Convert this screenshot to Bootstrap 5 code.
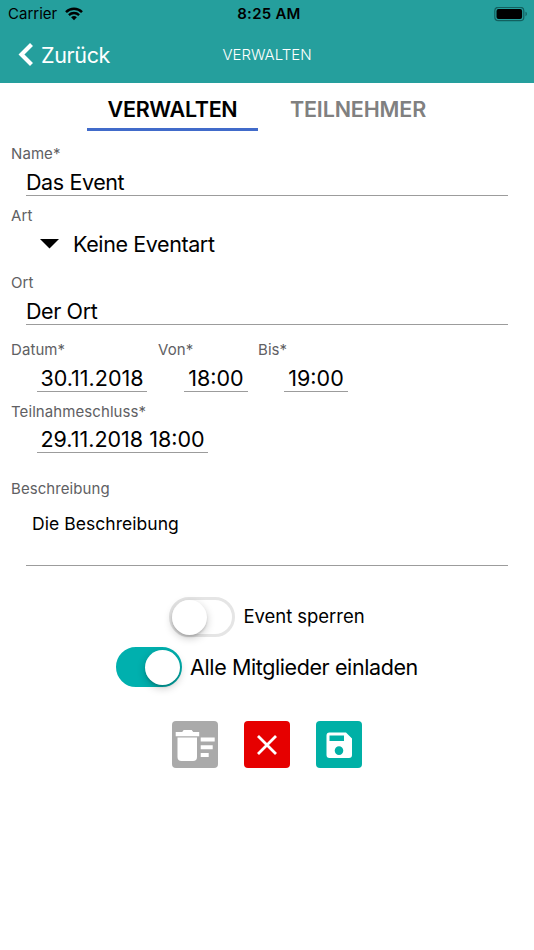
<!DOCTYPE html>
<html lang="de">
<head>
<meta charset="utf-8">
<meta name="viewport" content="width=device-width, initial-scale=1">
<title>Verwalten</title>
<link href="https://cdn.jsdelivr.net/npm/bootstrap@5.3.0/dist/css/bootstrap.min.css" rel="stylesheet">
<style>
  body { font-family: Inter, "Liberation Sans", sans-serif; font-size: 21.5px; letter-spacing: -.4px; color: #000; background: #fff; height: 950px; overflow: hidden; }
  .app-head { background: #259f9d; height: 83px; }
  .tri { display: grid; grid-template-columns: 1fr auto 1fr; align-items: center; }
  .status { height: 28px; font-size: 15px; line-height: 28px; letter-spacing: 0; padding-left: 8px; padding-right: 3px; }
  .clock { letter-spacing: .25px; margin-right: 1px; }
  .title-bar { height: 54px; color: #fff; }
  .back { font-size: 21.5px; line-height: 28px; letter-spacing: -.35px; }
  .head-title { font-size: 15px; font-weight: 300; line-height: 20px; letter-spacing: 0; }
  .tabs { height: 48px; padding-left: 87px; }
  .tab { height: 48px; width: 171px; line-height: 53px; font-size: 21.5px; letter-spacing: -.3px; font-weight: 600; text-align: center; white-space: nowrap; border-bottom: 3px solid #416bca; }
  .tab-off { width: 200px; color: #808080; border-color: transparent; letter-spacing: -.15px; }
  .form-area { padding: 13px 11px 0; }
  .lbl { font-size: 15px; line-height: 20px; letter-spacing: .08px; color: #606063; white-space: nowrap; }
  .fld { line-height: 26px; height: 27px; border-bottom: 1px solid #9c9c9c; white-space: nowrap; }
  .fld-wide { margin: 5px 15px 0 15px; }
  .fld-short { margin: 5px 0 0 26px; text-align: center; letter-spacing: 0; }
  .fld-end { margin-top: 4px; }
  .w-date { width: 110px; } .w-time { width: 64px; } .w-full { width: 171px; }
  .c-date { width: 147px; } .c-time { width: 100px; }
  .gap-a { margin-top: 10px; } .gap-b { margin-top: 15px; } .gap-c { margin-top: 26px; }
  .pick { margin: 4px 0 0 29px; height: 28px; line-height: 28px; }
  .pick svg { margin-right: 14px; }
  .desc { margin: 5px 15px 0; height: 62px; font-size: 17.5px; line-height: 40px; letter-spacing: .05px; padding-left: 6px; border-bottom: 1px solid #9c9c9c; }
  .sw { width: 66px; height: 40px; border-radius: 20px; border: 3px solid #e5e5e5; }
  .sw .knob { margin: 0 -.5px; }
  .sw-on { background: #00b0ae; border-color: #00b0ae; }
  .knob { width: 35px; height: 35px; border-radius: 50%; background: #fff; box-shadow: 0 3px 8px rgba(0,0,0,.22), 0 2px 2px rgba(0,0,0,.12); }
  .row-a { margin-top: 31px; font-size: 18.5px; letter-spacing: -.03px; }
  .row-b { margin-top: 10px; }
  .sw-text { margin-left: 8px; }
  .acts { margin-top: 34px; gap: 26px; }
  .act { width: 46px; height: 47px; border-radius: 4px; border: 0; padding: 0; background: #aaa; }
  .act svg { display: block; }
  .act-x { background: #e60000; } .act-save { background: #00b0a6; }
</style>
</head>
<body>
<header class="app-head">
  <div class="status tri">
    <div class="d-flex align-items-center">
      <span>Carrier</span>
      <svg class="ms-2" width="18" height="14" viewBox="0 0 18 14" fill="none" stroke="#000"><path d="M1 5.100a11.500 11.500 0 0 1 16 0" stroke-width="2.500"/><path d="M3.900 8.100a7.300 7.300 0 0 1 10.200 0" stroke-width="2.300"/><path d="M9 13.200l-2.900-2.900a4.200 4.200 0 0 1 5.800 0z" fill="#000" stroke="none"/></svg>
    </div>
    <span class="clock fw-semibold">8:25 AM</span>
    <div class="d-flex justify-content-end align-items-center">
      <svg width="37" height="15" viewBox="0 0 37 15"><rect x=".8" y=".3" width="29" height="13.400" rx="3.500" fill="none" stroke="#12605f" stroke-width="1.200"/><rect x="2.500" y="2" width="25.600" height="10" rx="2" fill="#000"/><path d="M31.500 4.800c1.800.6 1.800 3.800 0 4.400z" fill="#12605f"/></svg>
    </div>
  </div>
  <div class="title-bar tri">
    <a class="back d-flex align-items-center text-white text-decoration-none" href="#">
      <svg width="41" height="28" viewBox="0 0 41 28"><path d="M31.500 3.500L21.500 13.500l10 10" fill="none" stroke="#fff" stroke-width="4.200"/></svg><span>Zurück</span>
    </a>
    <span class="head-title">VERWALTEN</span>
    <span></span>
  </div>
</header>

<nav class="tabs d-flex">
  <div class="tab">VERWALTEN</div>
  <div class="tab tab-off">TEILNEHMER</div>
</nav>

<main class="form-area">
  <div class="lbl">Name*</div>
  <div class="fld fld-wide">Das Event</div>

  <div class="lbl gap-a">Art</div>
  <div class="pick d-flex align-items-center">
    <svg width="19" height="10" viewBox="0 0 19 10"><path d="M0 0h19l-9.500 9.500z"/></svg>
    <span>Keine Eventart</span>
  </div>

  <div class="lbl gap-b">Ort</div>
  <div class="fld fld-wide">Der Ort</div>

  <div class="d-flex gap-b">
    <div class="c-date"><div class="lbl">Datum*</div><div class="fld fld-short w-date">30.11.2018</div></div>
    <div class="c-time"><div class="lbl">Von*</div><div class="fld fld-short w-time">18:00</div></div>
    <div class="c-time"><div class="lbl">Bis*</div><div class="fld fld-short w-time">19:00</div></div>
  </div>

  <div class="lbl gap-a">Teilnahmeschluss*</div>
  <div class="fld fld-short fld-end w-full">29.11.2018 18:00</div>

  <div class="lbl gap-c">Beschreibung</div>
  <div class="desc">Die Beschreibung</div>

  <div class="row-a d-flex justify-content-center align-items-center">
    <div class="sw d-flex align-items-center"><div class="knob"></div></div>
    <span class="sw-text">Event sperren</span>
  </div>
  <div class="row-b d-flex justify-content-center align-items-center">
    <div class="sw sw-on d-flex align-items-center justify-content-end"><div class="knob"></div></div>
    <span class="sw-text">Alle Mitglieder einladen</span>
  </div>

  <div class="acts d-flex justify-content-center">
    <button type="button" class="act" aria-label="Löschen">
      <svg width="46" height="46" viewBox="0 0 46 46" fill="#fff"><path d="M3.700 10h6.500l1.500-2h8l1.500 2h6v4.200H3.700z"/><path d="M5.500 15.500h19.500V35a4 4 0 0 1-4 4H9.500a4 4 0 0 1-4-4z"/><path d="M28.700 15.500h14v4h-14zM28.700 23.200h12v4h-12zM28.700 31h8v4h-8z"/></svg>
    </button>
    <button type="button" class="act act-x" aria-label="Abbrechen">
      <svg width="46" height="46" viewBox="0 0 46 46"><path d="M14 14l18 18M32 14L14 32" stroke="#fff" stroke-width="2.800"/></svg>
    </button>
    <button type="button" class="act act-save" aria-label="Speichern">
      <svg width="46" height="46" viewBox="0 0 46 46"><path fill="#fff" fill-rule="evenodd" d="M13.500 10.500H30l6 6v16.500a3 3 0 0 1-3 3H13.500a3 3 0 0 1-3-3V13.500a3 3 0 0 1 3-3zM13.500 13.500v5.500h14.500V13.500zM23 24.300a4.300 4.300 0 1 0 0 8.600a4.300 4.300 0 1 0 0-8.600z"/></svg>
    </button>
  </div>
</main>
<script src="https://cdn.jsdelivr.net/npm/bootstrap@5.3.0/dist/js/bootstrap.bundle.min.js"></script>
</body>
</html>
